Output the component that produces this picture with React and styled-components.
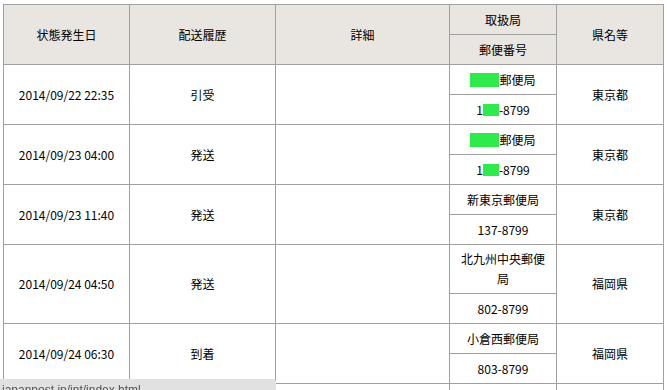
import styled, { createGlobalStyle } from 'styled-components';

const GlobalStyle = createGlobalStyle`
  html, body {
    margin: 0;
    padding: 0;
    background: #fff;
    overflow: hidden;
  }
  body {
    font-family: "MS UI Gothic", "Noto Sans CJK JP", sans-serif;
    font-size: 12px;
    color: #000;
  }
`;

const Page = styled.div`
  padding: 4px 0 0 3px;
  height: 386px;
  overflow: hidden;
`;

const Table = styled.table`
  border-collapse: collapse;
  width: 660px;
  table-layout: fixed;
`;

const Th = styled.th`
  background: #e9e5e1;
  border: 1px solid #a0a0a0;
  font-weight: normal;
  text-align: center;
  vertical-align: middle;
  height: 21px;
  padding: 4px 8px;
  line-height: 20px;
`;

const Td = styled.td`
  border: 1px solid #a0a0a0;
  text-align: center;
  vertical-align: middle;
  height: 21px;
  padding: 4px 10px;
  line-height: 20px;
  word-break: break-all;
`;

const Mask = styled.span`
  display: inline-block;
  vertical-align: middle;
  width: ${p => p.$w}px;
  height: ${p => p.$h}px;
  background: #2eea4a;
  margin-top: -2px;
`;

const StatusBar = styled.div`
  position: fixed;
  left: 0;
  bottom: 0;
  width: 274px;
  height: 11px;
  overflow: hidden;
  background: #e1e1e1;
  border-top-right-radius: 3px;
  color: #555;
  font-family: "Liberation Sans", Arial, sans-serif;
  font-size: 12px;
  line-height: 14px;
  padding-left: 2px;
  white-space: nowrap;
`;

const StatusText = styled.div`
  margin-top: 4px;
`;

const rows = [
  { date: '2014/09/22 22:35', kind: '引受', office: <><Mask $w={29} $h={14} />郵便局</>, zip: <>1<Mask $w={16} $h={12} />-8799</>, pref: '東京都' },
  { date: '2014/09/23 04:00', kind: '発送', office: <><Mask $w={29} $h={14} />郵便局</>, zip: <>1<Mask $w={16} $h={12} />-8799</>, pref: '東京都' },
  { date: '2014/09/23 11:40', kind: '発送', office: '新東京郵便局', zip: '137-8799', pref: '東京都' },
  { date: '2014/09/24 04:50', kind: '発送', office: '北九州中央郵便局', zip: '802-8799', pref: '福岡県' },
  { date: '2014/09/24 06:30', kind: '到着', office: '小倉西郵便局', zip: '803-8799', pref: '福岡県' },
  { date: '', kind: '', office: '', zip: '', pref: '' },
];

function RowPair({ r }) {
  return (
    <>
      <tr>
        <Td rowSpan={2}>{r.date}</Td>
        <Td rowSpan={2}>{r.kind}</Td>
        <Td rowSpan={2}></Td>
        <Td>{r.office}</Td>
        <Td rowSpan={2}>{r.pref}</Td>
      </tr>
      <tr>
        <Td>{r.zip}</Td>
      </tr>
    </>
  );
}

export default function App() {
  return (
    <>
      <GlobalStyle />
      <Page>
        <Table>
          <colgroup>
            <col style={{ width: 126 }} />
            <col style={{ width: 146 }} />
            <col style={{ width: 174 }} />
            <col style={{ width: 107 }} />
            <col style={{ width: 107 }} />
          </colgroup>
          <thead>
            <tr>
              <Th rowSpan={2}>状態発生日</Th>
              <Th rowSpan={2}>配送履歴</Th>
              <Th rowSpan={2}>詳細</Th>
              <Th>取扱局</Th>
              <Th rowSpan={2}>県名等</Th>
            </tr>
            <tr>
              <Th>郵便番号</Th>
            </tr>
          </thead>
          <tbody>
            {rows.map((r, i) => (
              <RowPair key={i} r={r} />
            ))}
          </tbody>
        </Table>
      </Page>
      <StatusBar>
        <StatusText>japanpost.jp/int/index.html</StatusText>
      </StatusBar>
    </>
  );
}
